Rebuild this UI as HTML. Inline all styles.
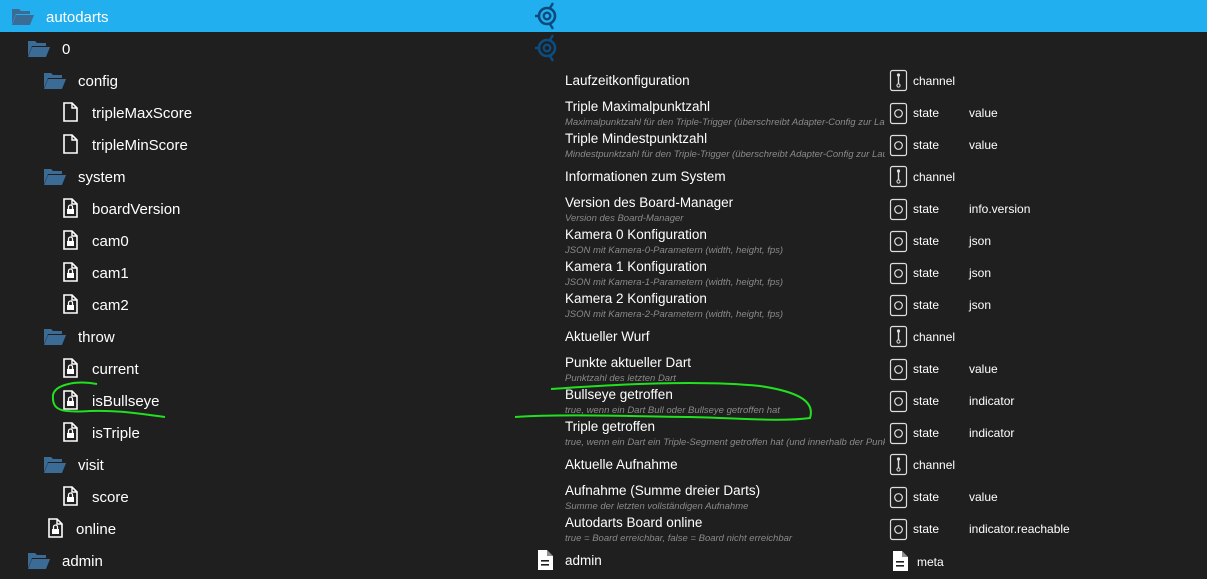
<!DOCTYPE html>
<html><head><meta charset="utf-8"><style>
*{margin:0;padding:0;box-sizing:border-box}
body{width:1207px;height:579px;background:#1f1f1f;overflow:hidden;position:relative;font-family:"Liberation Sans",sans-serif;color:#fff}
.hdr{position:absolute;left:0;top:0;width:1207px;height:32px;background:#22aff0}
.t{position:absolute;white-space:nowrap}
.n{font-size:15px;line-height:32px;height:32px;margin-top:2px}
.ti{font-size:13.5px;left:565px;margin-top:1px}
.d{font-size:9.5px;font-style:italic;color:#8a8a8a;left:565px;width:320px;overflow:hidden;margin-top:1px}
.ty{font-size:12px;left:913px;line-height:32px;margin-top:1px}
.ro{font-size:12px;left:969px;line-height:32px;margin-top:1px}
svg{position:absolute}
</style></head><body>
<div class="hdr"></div>
<svg width="1207" height="579" style="left:0;top:0">
<defs>
<g id="fold"><path d="M0 2 h7 l2 2 h9 v3 h-14 l-4 10 z" fill="#3b6c96"/><path d="M4 8 h18 l-4 10 h-18 z" fill="#3b6c96"/></g>
<g id="file"><path d="M1 1 h8 l5 5 v13 h-13 z" fill="none" stroke="#fff" stroke-width="1.6"/><path d="M9 1 v5 h5" fill="none" stroke="#fff" stroke-width="1.4"/></g>
<g id="lock"><path d="M1 1 h8 l5 5 v13 h-13 z" fill="none" stroke="#fff" stroke-width="1.6"/><path d="M9 1 v5 h5" fill="none" stroke="#fff" stroke-width="1.4"/><rect x="4" y="11" width="7" height="5" fill="#fff"/><path d="M5.5 11 v-2 a2 2 0 0 1 4 0 v2" fill="none" stroke="#fff" stroke-width="1.3"/></g>
<g id="tgt"><circle cx="0" cy="0" r="8" fill="none" stroke-width="2.6"/><circle cx="0" cy="0" r="3.3" fill="none" stroke-width="2.4"/><path d="M3 -8 L6 -13 M-8 0 H-12 M3 8 L6 13" stroke-width="2.4"/></g>
<g id="st"><rect x="0.5" y="0.5" width="16" height="20" rx="2" fill="none" stroke="#ddd" stroke-width="1.2"/><circle cx="8.5" cy="10.5" r="3.8" fill="none" stroke="#ddd" stroke-width="1.2"/></g>
<g id="ch"><rect x="0.5" y="0.5" width="16" height="20" rx="2" fill="none" stroke="#ddd" stroke-width="1.2"/><circle cx="8.5" cy="5" r="1.6" fill="#ddd"/><path d="M8.5 5 v9" stroke="#ddd" stroke-width="1.4"/><circle cx="8.5" cy="15.5" r="1.6" fill="none" stroke="#ddd" stroke-width="1"/></g>
<g id="doc"><path d="M1 0 h9 l6 6 v14 h-15 z" fill="#fff"/><path d="M10 0 v6 h6" fill="#1f1f1f" opacity=".5"/><rect x="4" y="10" width="8" height="1.6" fill="#1f1f1f"/><rect x="4" y="14" width="8" height="1.6" fill="#1f1f1f"/></g>
</defs>
<use href="#fold" x="12" y="7"/>
<use href="#fold" x="28" y="39"/>
<use href="#fold" x="44" y="71"/>
<use href="#file" x="63" y="102"/>
<use href="#file" x="63" y="134"/>
<use href="#fold" x="44" y="167"/>
<use href="#lock" x="63" y="198"/>
<use href="#lock" x="63" y="230"/>
<use href="#lock" x="63" y="262"/>
<use href="#lock" x="63" y="294"/>
<use href="#fold" x="44" y="327"/>
<use href="#lock" x="63" y="358"/>
<use href="#lock" x="63" y="390"/>
<use href="#lock" x="63" y="422"/>
<use href="#fold" x="44" y="455"/>
<use href="#lock" x="63" y="486"/>
<use href="#lock" x="48" y="518"/>
<use href="#fold" x="28" y="551"/>
<use href="#tgt" x="547" y="16" stroke="#0c4a7c" fill="none"/>
<use href="#tgt" x="547" y="48" stroke="#0b4d80" fill="none"/>
<use href="#ch" x="890" y="70"/>
<use href="#st" x="890" y="103"/>
<use href="#st" x="890" y="135"/>
<use href="#ch" x="890" y="166"/>
<use href="#st" x="890" y="199"/>
<use href="#st" x="890" y="231"/>
<use href="#st" x="890" y="263"/>
<use href="#st" x="890" y="295"/>
<use href="#ch" x="890" y="326"/>
<use href="#st" x="890" y="359"/>
<use href="#st" x="890" y="391"/>
<use href="#st" x="890" y="423"/>
<use href="#ch" x="890" y="454"/>
<use href="#st" x="890" y="487"/>
<use href="#st" x="890" y="519"/>
<use href="#doc" x="537" y="550"/>
<use href="#doc" x="892" y="551"/>
<path d="M97 384 C75 380 55 385 53 395 C52 410 60 413 90 411 C120 410 140 414 165 417" fill="none" stroke="#22e01f" stroke-width="2"/>
<path d="M551 389 C620 384 700 380 760 386 C800 392 815 402 810 418 C780 422 740 418 690 417 C620 416 560 414 515 417" fill="none" stroke="#22e01f" stroke-width="2"/>
</svg>
<div class="t n" style="left:46px;top:0">autodarts</div>
<div class="t n" style="left:62px;top:32px">0</div>
<div class="t n" style="left:78px;top:64px">config</div>
<div class="t n" style="left:92px;top:96px">tripleMaxScore</div>
<div class="t n" style="left:92px;top:128px">tripleMinScore</div>
<div class="t n" style="left:78px;top:160px">system</div>
<div class="t n" style="left:92px;top:192px">boardVersion</div>
<div class="t n" style="left:92px;top:224px">cam0</div>
<div class="t n" style="left:92px;top:256px">cam1</div>
<div class="t n" style="left:92px;top:288px">cam2</div>
<div class="t n" style="left:78px;top:320px">throw</div>
<div class="t n" style="left:92px;top:352px">current</div>
<div class="t n" style="left:92px;top:384px">isBullseye</div>
<div class="t n" style="left:92px;top:416px">isTriple</div>
<div class="t n" style="left:78px;top:448px">visit</div>
<div class="t n" style="left:92px;top:480px">score</div>
<div class="t n" style="left:76px;top:512px">online</div>
<div class="t n" style="left:62px;top:544px">admin</div>

<div class="t ti" style="top:72px">Laufzeitkonfiguration</div>
<div class="t ti" style="top:98px">Triple Maximalpunktzahl</div><div class="t d" style="top:116px">Maximalpunktzahl für den Triple-Trigger (überschreibt Adapter-Config zur Laufzeit)</div>
<div class="t ti" style="top:130px">Triple Mindestpunktzahl</div><div class="t d" style="top:148px">Mindestpunktzahl für den Triple-Trigger (überschreibt Adapter-Config zur Laufzeit)</div>
<div class="t ti" style="top:168px">Informationen zum System</div>
<div class="t ti" style="top:194px">Version des Board-Manager</div><div class="t d" style="top:212px">Version des Board-Manager</div>
<div class="t ti" style="top:226px">Kamera 0 Konfiguration</div><div class="t d" style="top:244px">JSON mit Kamera-0-Parametern (width, height, fps)</div>
<div class="t ti" style="top:258px">Kamera 1 Konfiguration</div><div class="t d" style="top:276px">JSON mit Kamera-1-Parametern (width, height, fps)</div>
<div class="t ti" style="top:290px">Kamera 2 Konfiguration</div><div class="t d" style="top:308px">JSON mit Kamera-2-Parametern (width, height, fps)</div>
<div class="t ti" style="top:328px">Aktueller Wurf</div>
<div class="t ti" style="top:354px">Punkte aktueller Dart</div><div class="t d" style="top:372px">Punktzahl des letzten Dart</div>
<div class="t ti" style="top:386px">Bullseye getroffen</div><div class="t d" style="top:404px">true, wenn ein Dart Bull oder Bullseye getroffen hat</div>
<div class="t ti" style="top:418px">Triple getroffen</div><div class="t d" style="top:436px">true, wenn ein Dart ein Triple-Segment getroffen hat (und innerhalb der Punktgrenzen liegt)</div>
<div class="t ti" style="top:456px">Aktuelle Aufnahme</div>
<div class="t ti" style="top:482px">Aufnahme (Summe dreier Darts)</div><div class="t d" style="top:500px">Summe der letzten vollständigen Aufnahme</div>
<div class="t ti" style="top:514px">Autodarts Board online</div><div class="t d" style="top:532px">true = Board erreichbar, false = Board nicht erreichbar</div>
<div class="t ti" style="top:552px">admin</div>

<div class="t ty" style="top:64px">channel</div>
<div class="t ty" style="top:96px">state</div><div class="t ro" style="top:96px">value</div>
<div class="t ty" style="top:128px">state</div><div class="t ro" style="top:128px">value</div>
<div class="t ty" style="top:160px">channel</div>
<div class="t ty" style="top:192px">state</div><div class="t ro" style="top:192px">info.version</div>
<div class="t ty" style="top:224px">state</div><div class="t ro" style="top:224px">json</div>
<div class="t ty" style="top:256px">state</div><div class="t ro" style="top:256px">json</div>
<div class="t ty" style="top:288px">state</div><div class="t ro" style="top:288px">json</div>
<div class="t ty" style="top:320px">channel</div>
<div class="t ty" style="top:352px">state</div><div class="t ro" style="top:352px">value</div>
<div class="t ty" style="top:384px">state</div><div class="t ro" style="top:384px">indicator</div>
<div class="t ty" style="top:416px">state</div><div class="t ro" style="top:416px">indicator</div>
<div class="t ty" style="top:448px">channel</div>
<div class="t ty" style="top:480px">state</div><div class="t ro" style="top:480px">value</div>
<div class="t ty" style="top:512px">state</div><div class="t ro" style="top:512px">indicator.reachable</div>
<div class="t ty" style="top:545px;left:917px">meta</div>
</body></html>
